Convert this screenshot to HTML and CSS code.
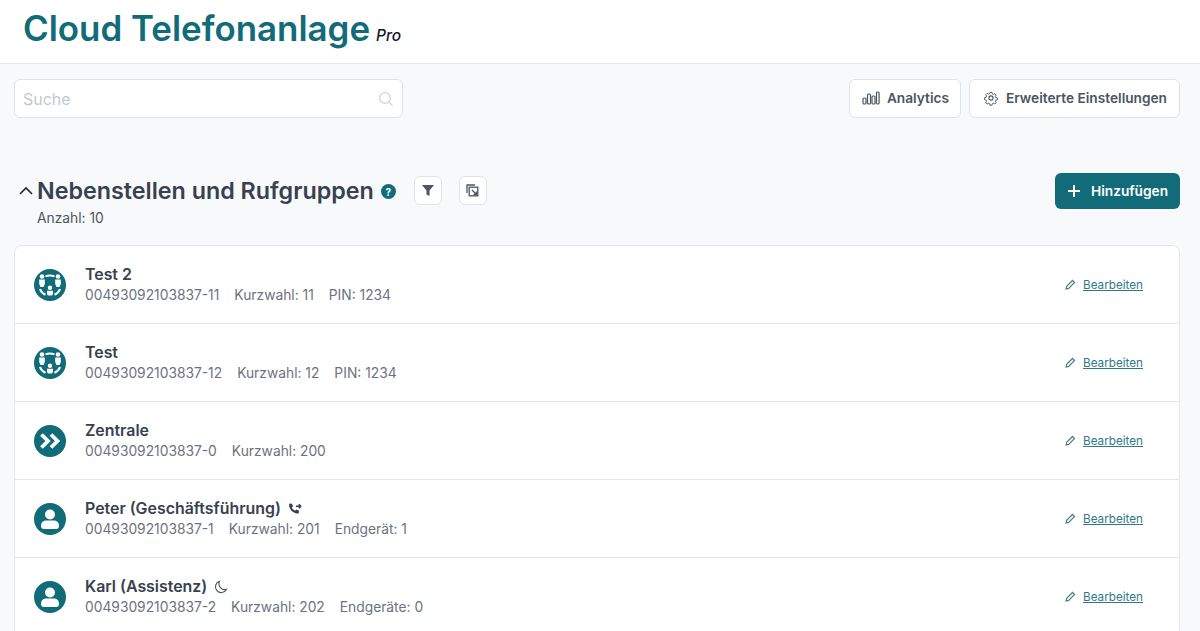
FILE: index.html
```html
<!DOCTYPE html>
<html lang="de">
<head>
    <meta charset="UTF-8">
    <title>Cloud Telefonanlage Pro</title>
    <link rel="stylesheet" href="styles.css">
</head>
<body>
    <header class="topbar">
        <h1 class="brand">Cloud Telefonanlage</h1>
        <span class="brand-pro">Pro</span>
    </header>

    <main class="content">
        <div class="toolbar">
            <div class="search">
                <span class="search-text">Suche</span>
                <svg width="16" height="16" viewBox="0 0 16 16" fill="none" stroke="#d1d5db" stroke-width="1.3"><circle cx="7" cy="7" r="5.4"/><path d="M11 11l3.6 3.6"/></svg>
            </div>
            <div class="toolbar-buttons">
                <button class="btn">
                    <svg width="18" height="14" viewBox="0 0 18 14" fill="none" stroke="#4b5563" stroke-width="1.2"><rect x="1" y="7" width="3" height="6" rx="1"/><rect x="5.5" y="3" width="3" height="10" rx="1"/><rect x="10" y="5" width="3" height="8" rx="1"/><rect x="14.5" y="1" width="2.6" height="12" rx="1"/></svg>
                    Analytics
                </button>
                <button class="btn">
                    <svg class="gear" width="16" height="16" viewBox="0 0 16 16" fill="none" stroke="#4b5563" stroke-width="1.1"><circle cx="8" cy="8" r="2.1"/><path d="M6.800 1.500h2.400l.4 1.800 1.200.6 1.700-.9 1.600 1.700-1 1.600.5 1.200 1.800.4v2.200l-1.800.5-.5 1.200 1 1.600-1.600 1.600-1.700-.9-1.200.5-.4 1.800H6.800l-.4-1.800-1.200-.5-1.700.9-1.600-1.600 1-1.600-.5-1.200-1.800-.5V7.500l1.800-.4.5-1.200-1-1.600 1.600-1.700 1.700.9 1.200-.6z" transform="translate(1.100 1.100) scale(.86)"/></svg>
                    Erweiterte Einstellungen
                </button>
            </div>
        </div>

        <section class="section-head">
            <div class="section-left">
                <svg class="chevron" width="14" height="9" viewBox="0 0 14 9" fill="none" stroke="#1f2937" stroke-width="1.6"><path d="M1 8l6-6 6 6"/></svg>
                <div>
                    <div class="section-title-row">
                        <h2 class="section-title">Nebenstellen und Rufgruppen</h2>
                        <span class="help">?</span>
                        <button class="mini-btn filter-btn">
                            <svg width="14" height="14" viewBox="0 0 14 14" fill="#4b5563"><path d="M1 2h12L8.500 7.500V13l-3-1.600V7.500z"/></svg>
                        </button>
                        <button class="mini-btn">
                            <svg width="13" height="13" viewBox="0 0 13 13" fill="none" stroke="#4b5563" stroke-width="1.3"><path d="M1 9V1h8"/><rect x="3.200" y="3.200" width="8.600" height="8.600"/><path d="M6 6l4.500 4.500M10.500 7.500v3h-3"/></svg>
                        </button>
                    </div>
                    <div class="section-count">Anzahl: 10</div>
                </div>
            </div>
            <button class="btn-add">
                <svg width="14" height="14" viewBox="0 0 14 14" stroke="#fff" stroke-width="2"><path d="M7 1v12M1 7h12"/></svg>
                Hinzufügen
            </button>
        </section>

        <div class="list">
            <div class="row">
                <svg class="avatar" viewBox="0 0 32 32"><use href="#icon-group"/></svg>
                <div class="row-main">
                    <div class="row-name">Test 2</div>
                    <div class="row-meta"><span>00493092103837-11</span><span>Kurzwahl: 11</span><span>PIN: 1234</span></div>
                </div>
                <a class="edit"><svg width="11" height="11" viewBox="0 0 12 12"><use href="#icon-pencil"/></svg><span>Bearbeiten</span></a>
            </div>
            <div class="row">
                <svg class="avatar" viewBox="0 0 32 32"><use href="#icon-group"/></svg>
                <div class="row-main">
                    <div class="row-name">Test</div>
                    <div class="row-meta"><span>00493092103837-12</span><span>Kurzwahl: 12</span><span>PIN: 1234</span></div>
                </div>
                <a class="edit"><svg width="11" height="11" viewBox="0 0 12 12"><use href="#icon-pencil"/></svg><span>Bearbeiten</span></a>
            </div>
            <div class="row">
                <svg class="avatar" viewBox="0 0 32 32"><circle cx="16" cy="16" r="16" fill="#116b78"/><path d="M7.500 9.500L14 16l-6.500 6.500M17 9.500l6.500 6.500-6.500 6.500" fill="none" stroke="#fff" stroke-width="3.800"/></svg>
                <div class="row-main">
                    <div class="row-name">Zentrale</div>
                    <div class="row-meta"><span>00493092103837-0</span><span>Kurzwahl: 200</span></div>
                </div>
                <a class="edit"><svg width="11" height="11" viewBox="0 0 12 12"><use href="#icon-pencil"/></svg><span>Bearbeiten</span></a>
            </div>
            <div class="row">
                <svg class="avatar" viewBox="0 0 32 32"><use href="#icon-user"/></svg>
                <div class="row-main">
                    <div class="row-name">Peter (Geschäftsführung)
                        <svg width="14" height="14" viewBox="0 0 14 14" fill="none" stroke="#374151" stroke-width="1.5"><path d="M2 1.500l2 .2 1 2.600-1.200 1.200c.7 1.500 1.700 2.500 3.200 3.200l1.200-1.200 2.600 1 .2 2c-.2.6-.7 1-1.400 1C5.300 11.500 1.500 7.500 1 2.900c0-.6.400-1.200 1-1.400z" fill="#374151" stroke="none"/><path d="M8 4.200h4.500M10.800 2.300l1.900 1.900-1.900 1.900"/></svg>
                    </div>
                    <div class="row-meta"><span>00493092103837-1</span><span>Kurzwahl: 201</span><span>Endgerät: 1</span></div>
                </div>
                <a class="edit"><svg width="11" height="11" viewBox="0 0 12 12"><use href="#icon-pencil"/></svg><span>Bearbeiten</span></a>
            </div>
            <div class="row">
                <svg class="avatar" viewBox="0 0 32 32"><use href="#icon-user"/></svg>
                <div class="row-main">
                    <div class="row-name">Karl (Assistenz)
                        <svg width="14" height="14" viewBox="0 0 14 14" fill="none" stroke="#4b5563" stroke-width="1.1"><path d="M5.500 1.300a5.800 5.800 0 0 0 7 8A5.800 5.800 0 1 1 5.500 1.300z"/></svg>
                    </div>
                    <div class="row-meta"><span>00493092103837-2</span><span>Kurzwahl: 202</span><span>Endgeräte: 0</span></div>
                </div>
                <a class="edit"><svg width="11" height="11" viewBox="0 0 12 12"><use href="#icon-pencil"/></svg><span>Bearbeiten</span></a>
            </div>
        </div>
    </main>

    <svg class="icon-defs" width="0" height="0">
        <defs>
            <path id="icon-pencil" d="M1.200 10.800l.6-2.800 6.400-6.400 2.200 2.200L4 10.200z" fill="none" stroke="#4b7f88" stroke-width="1.300"/>
            <g id="icon-group">
                <circle cx="16" cy="16" r="16" fill="#116b78"/>
                <circle cx="8" cy="7.500" r="2.300" fill="#fff"/>
                <path d="M5.200 10.500h5.600v4.500L9.500 18H6.500l-1.300-3z" fill="#fff"/>
                <circle cx="24" cy="7.500" r="2.300" fill="#fff"/>
                <path d="M21.200 10.500h5.600V15l-1.300 3h-3l-1.300-3z" fill="#fff"/>
                <circle cx="16" cy="18.800" r="2.200" fill="#fff"/>
                <path d="M13 21.700h6v3.300l-1 1.500h-4l-1-1.500z" fill="#fff"/>
                <path d="M11.500 7.400c3-1.200 6-1.200 9 0M6 20c.8 2.500 2.500 4.300 5.500 5.800M26 20c-.8 2.500-2.500 4.300-5.500 5.800" fill="none" stroke="#fff" stroke-width="2.100"/>
            </g>
            <g id="icon-user">
                <circle cx="16" cy="16" r="16" fill="#116b78"/>
                <circle cx="16" cy="11.500" r="5" fill="#fff"/>
                <path d="M7 23c0-3.800 2.500-5.500 5.500-5.500h7c3 0 5.500 1.700 5.500 5.500 0 2-1 3-3 3H10c-2 0-3-1-3-3z" fill="#fff"/>
            </g>
        </defs>
    </svg>
</body>
</html>
```
FILE: styles.css
```css
* {
    box-sizing: border-box;
}
body {
    margin: 0;
    font-family: 'Inter', sans-serif;
    background: #f8f9fb;
    color: #374151;
    height: 631px;
    overflow: hidden;
}
button {
    font-family: inherit;
}
.icon-defs {
    position: absolute;
}
.topbar {
    height: 64px;
    background: white;
    border-bottom: 1px solid #e5e7eb;
    padding-left: 23px;
    display: flex;
    align-items: baseline;
}
.brand {
    margin: 0;
    font-size: 34.9px;
    font-weight: 600;
    line-height: 57px;
    color: #116b78;
}
.brand-pro {
    margin-left: 6px;
    font-size: 15.5px;
    font-style: italic;
    font-weight: 500;
    color: #111827;
}
.content {
    padding: 15px 20px 0 14px;
}
.toolbar {
    display: flex;
    justify-content: space-between;
    align-items: center;
}
.search {
    width: 389px;
    height: 39px;
    background: white;
    border: 1px solid #dfe2e7;
    border-radius: 6px;
    padding: 0 8px;
    display: flex;
    align-items: center;
    justify-content: space-between;
}
.search-text {
    font-size: 16px;
    color: #c4c8ce;
}
.toolbar-buttons {
    display: flex;
    gap: 8px;
}
.btn {
    height: 39px;
    padding: 0 11px 2px 12px;
    background: white;
    border: 1px solid #dfe2e7;
    border-radius: 6px;
    display: flex;
    align-items: center;
    gap: 7px;
    font-size: 13.7px;
    font-weight: 600;
    color: #4b5563;
}
.btn:last-child {
    padding-right: 12px;
}
.gear {
    margin-left: 1px;
}
.section-head {
    margin-top: 54px;
    display: flex;
    justify-content: space-between;
    align-items: flex-start;
}
.section-left {
    display: flex;
    align-items: flex-start;
}
.chevron {
    margin: 14px 4px 0 5px;
}
.section-title-row {
    display: flex;
    align-items: center;
    height: 36px;
}
.section-title {
    margin: 0;
    font-size: 23.3px;
    font-weight: 600;
    color: #374151;
}
.help {
    width: 15px;
    height: 15px;
    margin: 3px 0 0 7px;
    border-radius: 50%;
    background: #116b78;
    color: white;
    font-size: 10px;
    font-weight: 700;
    display: flex;
    align-items: center;
    justify-content: center;
}
.mini-btn {
    width: 28px;
    height: 29px;
    padding: 0;
    background: white;
    border: 1px solid #dfe2e7;
    border-radius: 6px;
    margin-left: 17px;
    display: flex;
    align-items: center;
    justify-content: center;
}
.filter-btn {
    margin-left: 18px;
}
.section-count {
    font-size: 13.8px;
    color: #4b5563;
    margin-top: 2px;
}
.btn-add {
    height: 36px;
    margin-top: 1px;
    padding: 0;
    background: #116b78;
    border: none;
    border-radius: 6px;
    color: white;
    font-size: 13.7px;
    font-weight: 600;
    display: flex;
    align-items: center;
    gap: 10px;
    width: 125px;
    justify-content: center;
}
.list {
    margin-top: 19px;
    background: white;
    border: 1px solid #e5e7eb;
    border-radius: 8px;
}
.row {
    height: 78px;
    display: flex;
    align-items: center;
    padding: 0 36px 0 19px;
    border-bottom: 1px solid #e5e7eb;
}
.avatar {
    width: 32px;
    height: 32px;
    margin-right: 19px;
    flex-shrink: 0;
}
.row-main {
    flex: 1;
}
.row-name {
    font-size: 15.9px;
    font-weight: 600;
    color: #374151;
    line-height: 20px;
    display: flex;
    align-items: center;
    gap: 7px;
}
.row-meta {
    font-size: 13.8px;
    color: #6b7280;
    line-height: 20px;
    display: flex;
    gap: 15px;
}
.edit {
    display: flex;
    align-items: center;
    gap: 7px;
    font-size: 11.7px;
    color: #2f7a86;
}
.edit span {
    text-decoration: underline;
}
```
